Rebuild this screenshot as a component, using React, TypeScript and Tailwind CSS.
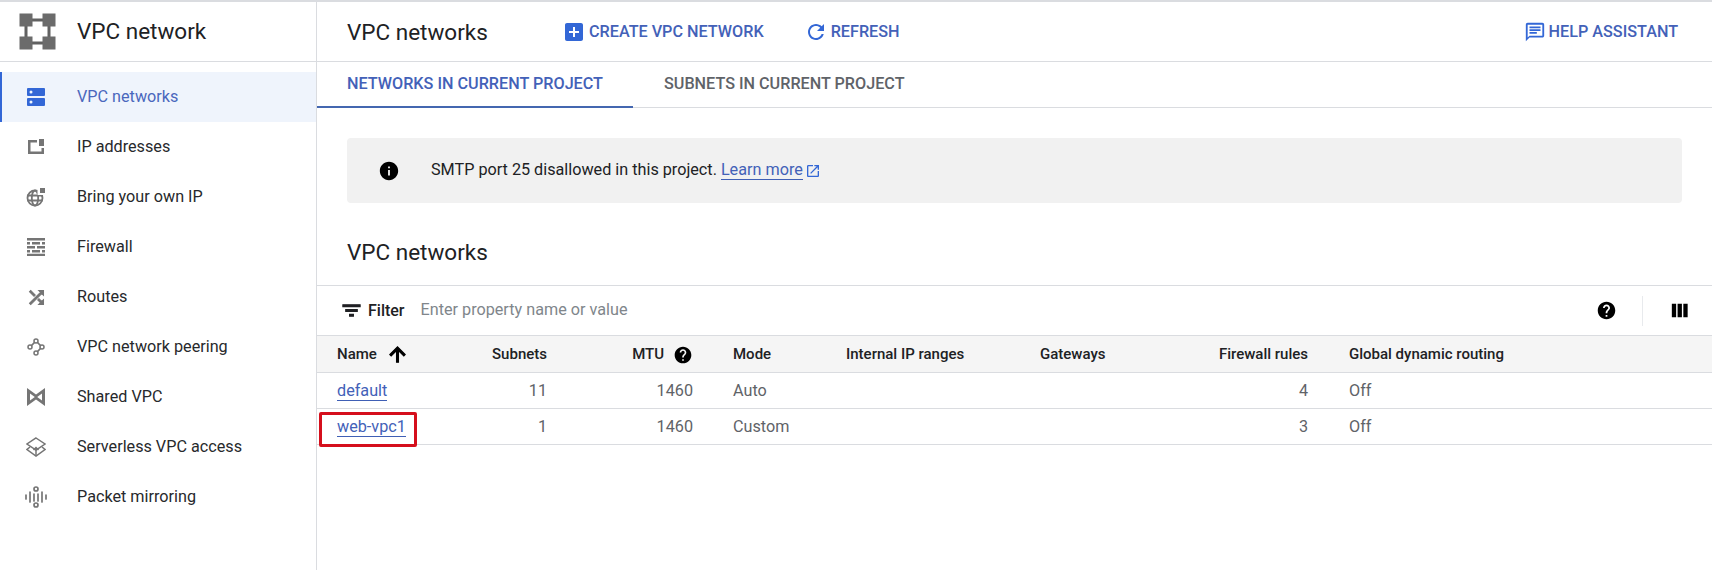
import React from "react";

const BLUE = "#3367d6";

function Icon({ d, size = 24, color = "currentColor", className = "", stroke }: { d: string; size?: number; color?: string; className?: string; stroke?: string }) {
  return (
    <svg width={size} height={size} viewBox="0 0 24 24" fill={color} stroke={stroke} strokeWidth={stroke ? 1.2 : undefined} className={`shrink-0 ${className}`}>
      <path d={d} />
    </svg>
  );
}

const paths = {
  help: "M12 2C6.48 2 2 6.48 2 12s4.48 10 10 10 10-4.48 10-10S17.52 2 12 2zm1 17h-2v-2h2v2zm2.07-7.75l-.9.92C13.45 12.9 13 13.5 13 15h-2v-.5c0-1.1.45-2.1 1.17-2.83l1.24-1.26c.37-.36.59-.86.59-1.41 0-1.1-.9-2-2-2s-2 .9-2 2H8c0-2.21 1.79-4 4-4s4 1.79 4 4c0 .88-.36 1.68-.93 2.25z",
  info: "M12 2C6.48 2 2 6.48 2 12s4.48 10 10 10 10-4.48 10-10S17.52 2 12 2zm1 15h-2v-6h2v6zm0-8h-2V7h2v2z",
  addBox: "M19 3H5c-1.11 0-2 .9-2 2v14c0 1.1.89 2 2 2h14c1.1 0 2-.9 2-2V5c0-1.1-.9-2-2-2zm-2 10h-4v4h-2v-4H7v-2h4V7h2v4h4v2z",
  refresh: "M17.65 6.35C16.2 4.9 14.21 4 12 4c-4.42 0-7.99 3.58-7.99 8s3.57 8 7.99 8c3.73 0 6.84-2.55 7.73-6h-2.08c-.82 2.33-3.04 4-5.65 4-3.31 0-6-2.69-6-6s2.69-6 6-6c1.66 0 3.14.69 4.22 1.78L13 11h7V4l-2.35 2.35z",
  chat: "M20 2H4c-1.1 0-2 .9-2 2v18l4-4h14c1.1 0 2-.9 2-2V4c0-1.1-.9-2-2-2zm0 14H6l-2 2V4h16v12zM6 6h12v2H6zM6 9h12v2H6zM6 12h8v2H6z",
  filter: "M10 18h4v-2h-4v2zM3 6v2h18V6H3zm3 7h12v-2H6v2z",
  arrowUp: "M4 12l1.41 1.41L11 7.83V20h2V7.83l5.58 5.59L20 12l-8-8-8 8z",
  columns: "M10 19h4.5V5H10v14zM4 19h4.5V5H4v14zM16 5v14h4.5V5H16z",
  openNew: "M19 19H5V5h7V3H5c-1.11 0-2 .9-2 2v14c0 1.1.89 2 2 2h14c1.1 0 2-.9 2-2v-7h-2v7zM14 3v2h3.59l-9.83 9.83 1.41 1.41L19 6.41V10h2V3h-7z",
  shuffle: "M10.59 9.17L5.41 4 4 5.41l5.17 5.17 1.42-1.41zM14.5 4l2.04 2.04L4 18.59 5.41 20 17.96 7.46 20 9.5V4h-5.5zm.33 9.41l-1.41 1.41 3.13 3.13L14.5 20H20v-5.5l-2.04 2.04-3.13-3.13z",
};

function Logo() {
  return (
    <svg width="37" height="37" viewBox="0 0 37 37" className="shrink-0">
      <path d="M7 7h23v23H7z" fill="none" stroke="#616161" strokeWidth="3" />
      <rect x="0.5" y="0.5" width="13" height="13" fill="#6b6b6b" />
      <rect x="23.5" y="0.5" width="13" height="13" fill="#6b6b6b" />
      <rect x="0.5" y="23.5" width="13" height="13" fill="#6b6b6b" />
      <rect x="23.5" y="23.5" width="13" height="13" fill="#6b6b6b" />
    </svg>
  );
}

const navIcons: Record<string, React.ReactNode> = {
  vpc: (
    <svg width="18" height="18" viewBox="0 0 18 18">
      <path fillRule="evenodd" fill={BLUE} d="M1 0h16a1 1 0 0 1 1 1v6a1 1 0 0 1-1 1H1a1 1 0 0 1-1-1V1a1 1 0 0 1 1-1zm3 2.5a1.5 1.5 0 1 0 0 3 1.5 1.5 0 0 0 0-3zM1 10h16a1 1 0 0 1 1 1v6a1 1 0 0 1-1 1H1a1 1 0 0 1-1-1v-6a1 1 0 0 1 1-1zm3 2.5a1.5 1.5 0 1 0 0 3 1.5 1.5 0 0 0 0-3z" />
    </svg>
  ),
  ip: (
    <svg width="18" height="18" viewBox="0 0 18 18" fill="#757575">
      <path d="M1 2h9v2.5H3.5v9h11V10H17v6H1z" />
      <path d="M12 1h5v7h-5z" />
    </svg>
  ),
  byoip: (
    <svg width="20" height="20" viewBox="0 0 20 20" fill="none" stroke="#757575" strokeWidth="1.8">
      <circle cx="9" cy="11" r="7.5" />
      <ellipse cx="9" cy="11" rx="3.2" ry="7.5" />
      <path d="M1.5 8.5h15M1.5 13.5h15" />
      <rect x="11.5" y="0" width="8" height="8" fill="#fff" stroke="none" />
      <rect x="14" y="1" width="5" height="5" fill="#757575" stroke="none" />
    </svg>
  ),
  firewall: (
    <svg width="18" height="18" viewBox="0 0 18 18" fill="#757575">
      <path d="M0 0h18v2.5H0zM0 4h3v2.5H0zM5 4h8v2.5H5zM15 4h3v2.5h-3zM0 8h8v2.5H0zM10 8h8v2.5h-8zM0 12h3v2.5H0zM5 12h8v2.5H5zM15 12h3v2.5h-3zM0 15.8h18v2.2H0z" />
    </svg>
  ),
  routes: <Icon d={paths.shuffle} size={21} color="#757575" stroke="#757575" />,
  peering: (
    <svg width="18" height="18" viewBox="0 0 18 18" fill="none" stroke="#757575" strokeWidth="1.5">
      <circle cx="9" cy="3" r="2" />
      <circle cx="3" cy="9" r="2" />
      <circle cx="15" cy="9" r="2" />
      <circle cx="9" cy="15" r="2" />
      <path d="M7.6 4.4L4.4 7.6M10.4 4.4l3.2 3.2M13.6 10.4l-3.2 3.2" />
    </svg>
  ),
  shared: (
    <svg width="18" height="18" viewBox="0 0 18 18" fill="#757575">
      <path fillRule="evenodd" d="M0 0l9 6.5L18 0v18l-9-6.5L0 18zM3 5.5v7L7.8 9zM15 5.5L10.2 9l4.8 3.5z" />
    </svg>
  ),
  serverless: (
    <svg width="20" height="20" viewBox="0 0 20 20" fill="none" stroke="#757575" strokeWidth="1.5">
      <path d="M10 1l9 6-9 6-9-6z" />
      <path d="M4 10l-3 2.5L10 19l9-6.5-3-2.5" />
      <path d="M10 18v-7M7.5 13l2.5-2.5 2.5 2.5" />
    </svg>
  ),
  packet: (
    <svg width="22" height="22" viewBox="0 0 22 22" fill="none" stroke="#757575" strokeWidth="1.7" strokeLinecap="round">
      <path d="M1 9v4M5 6v10M17 6v10M21 9v4M9 8v7M13 8v7" />
      <circle cx="11" cy="3" r="2" />
      <circle cx="11" cy="19" r="2" />
    </svg>
  ),
};

const navItems = [
  { key: "vpc", label: "VPC networks", active: true },
  { key: "ip", label: "IP addresses" },
  { key: "byoip", label: "Bring your own IP" },
  { key: "firewall", label: "Firewall" },
  { key: "routes", label: "Routes" },
  { key: "peering", label: "VPC network peering" },
  { key: "shared", label: "Shared VPC" },
  { key: "serverless", label: "Serverless VPC access" },
  { key: "packet", label: "Packet mirroring" },
];

const rowCols = "grid grid-cols-[124px_122px_146px_112px_194px_136px_173px_1fr] items-center";

function Link({ children }: { children: React.ReactNode }) {
  return <span className="text-[#4361b8] border-b border-[#3f5fb5] leading-[18px]">{children}</span>;
}

function Row({ name, subnets, mode, fw, boxed }: { name: string; subnets: string; mode: string; fw: string; boxed?: boolean }) {
  return (
    <div className={`${rowCols} h-9 pt-[2px] border-b border-[#dadce0] text-[16.2px] text-[#5f6368]`}>
      <div className="pl-5 relative h-full flex items-center">
        <Link>{name}</Link>
        {boxed && <div className="absolute left-[2px] top-[1px] w-[98px] h-[35px] border-[3px] border-[#d50f1c] rounded-[2px]" />}
      </div>
      <div className="text-right pr-4">{subnets}</div>
      <div className="text-right pr-4">1460</div>
      <div className="pl-6">{mode}</div>
      <div />
      <div />
      <div className="text-right pr-4">{fw}</div>
      <div className="pl-[25px]">Off</div>
    </div>
  );
}

export default function App() {
  return (
    <div className="w-[1712px] h-[570px] flex bg-white border-t-2 border-[#dadce0] overflow-hidden" style={{ fontFamily: "Roboto, sans-serif" }}>
      <aside className="w-[317px] shrink-0 border-r border-[#dadce0] flex flex-col">
        <div className="h-[60px] shrink-0 border-b border-[#dadce0] flex items-center pl-[19px] gap-[21px]">
          <Logo />
          <span className="text-[22.5px] text-[#202124]">VPC network</span>
        </div>
        <nav className="pt-[10px] flex flex-col">
          {navItems.map((item) => (
            <div
              key={item.key}
              className={`h-[50px] flex items-center text-[16.2px] ${
                item.active
                  ? "bg-[#eff4fc] text-[#4a67bd] border-l-2 border-[#3367d6]"
                  : "text-[#27292c] border-l-2 border-transparent"
              }`}
            >
              <span className="w-[70px] flex justify-center mr-[5px] shrink-0 [&>svg]:-ml-[2px]">{navIcons[item.key]}</span>
              {item.label}
            </div>
          ))}
        </nav>
      </aside>

      <main className="flex-1 flex flex-col min-w-0">
        <header className="h-[60px] shrink-0 border-b border-[#dadce0] flex items-center pt-[2px] pl-[30px] pr-[34px]">
          <h1 className="text-[22.5px] text-[#202124] w-[215px]">VPC networks</h1>
          <button className="flex items-center gap-[3px] text-[16.2px] font-medium text-[#4361b8]">
            <Icon d={paths.addBox} size={24} color={BLUE} />
            CREATE VPC NETWORK
          </button>
          <button className="flex items-center gap-[3px] text-[16.2px] font-medium text-[#4361b8] ml-[40px]">
            <Icon d={paths.refresh} size={24} color={BLUE} />
            REFRESH
          </button>
          <button className="flex items-center gap-[3px] text-[16.2px] font-medium text-[#4361b8] ml-auto">
            <Icon d={paths.chat} size={22} color={BLUE} />
            HELP ASSISTANT
          </button>
        </header>

        <div className="h-[46px] shrink-0 border-b border-[#dadce0] flex text-[16.2px] font-medium">
          <div className="w-[316px] h-[46px] border-b-2 border-[#4467b0] flex items-center pl-[30px] text-[#4361b8]">NETWORKS IN CURRENT PROJECT</div>
          <div className="flex items-center pl-[31px] text-[#5f6368]">SUBNETS IN CURRENT PROJECT</div>
        </div>

        <div className="ml-[30px] mr-[30px] mt-[30px] h-[65px] bg-[#f1f1f1] rounded flex items-center pl-[31px] text-[16.2px] text-[#202124]">
          <Icon d={paths.info} size={22} color="#000" className="mr-[31px]" />
          <span>SMTP port 25 disallowed in this project.</span>
          <span className="ml-1"><Link>Learn more</Link></span>
          <Icon d={paths.openNew} size={16} color={BLUE} className="ml-[2px]" />
        </div>

        <h2 className="ml-[30px] mt-[35px] h-[47px] text-[22.5px] leading-7 text-[#202124]">VPC networks</h2>

        <div className="h-[51px] border-y border-[#dadce0] flex items-center pl-[23px] pr-[21px]">
          <Icon d={paths.filter} size={23} color="#202124" stroke="#202124" />
          <span className="ml-[5px] text-[16px] font-medium text-[#202124]">Filter</span>
          <span className="ml-[16px] text-[16.2px] text-[#80868b]">Enter property name or value</span>
          <Icon d={paths.help} size={21} color="#000" className="ml-auto" />
          <div className="w-px h-[30px] bg-[#e8eaed] mx-[25px]" />
          <Icon d={paths.columns} size={23} color="#000" />
        </div>

        <div className={`${rowCols} h-[37px] pt-[1px] bg-[#f5f5f5] border-b border-[#dadce0] text-[15px] font-medium text-[#202124]`}>
          <div className="pl-5 flex items-center gap-[9px]">
            Name
            <Icon d={paths.arrowUp} size={23} color="#000" stroke="#000" />
          </div>
          <div className="text-right pr-4">Subnets</div>
          <div className="pr-4 flex items-center justify-end gap-[9px]">
            MTU
            <Icon d={paths.help} size={20} color="#000" />
          </div>
          <div className="pl-6">Mode</div>
          <div className="pl-[25px]">Internal IP ranges</div>
          <div className="pl-[25px]">Gateways</div>
          <div className="text-right pr-4">Firewall rules</div>
          <div className="pl-[25px]">Global dynamic routing</div>
        </div>

        <Row name="default" subnets="11" mode="Auto" fw="4" />
        <Row name="web-vpc1" subnets="1" mode="Custom" fw="3" boxed />
      </main>
    </div>
  );
}
